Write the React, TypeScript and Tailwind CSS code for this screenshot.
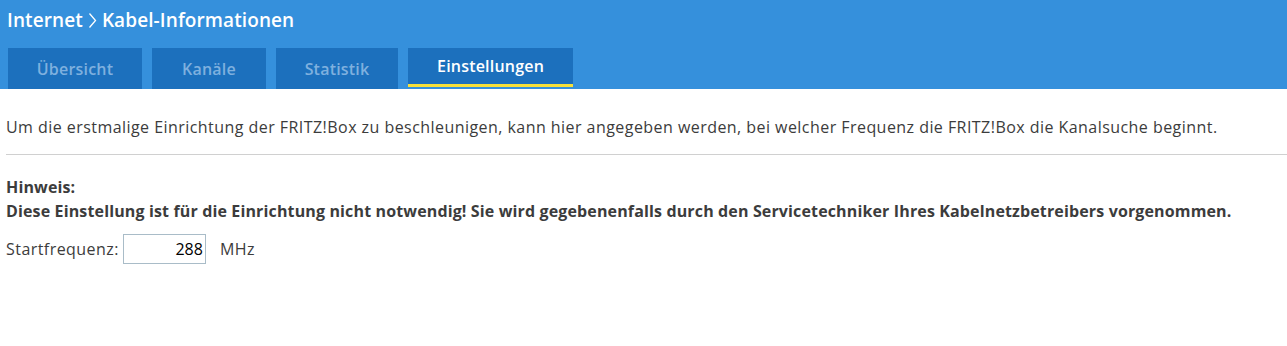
export default function App() {
  const tabs = [
    { label: "Übersicht", w: "w-[134px]", active: false },
    { label: "Kanäle", w: "w-[114px]", active: false },
    { label: "Statistik", w: "w-[122px]", active: false },
    { label: "Einstellungen", w: "w-[165px]", active: true },
  ];

  return (
    <div className="w-[1287px] h-[346px] bg-white text-[#3c3c3c] font-['Open_Sans','Noto_Sans',sans-serif]">
      <div className="bg-[#3590dc] h-[89px] flex flex-col">
        <div className="h-[40px] flex items-center pl-[7px] text-white text-[19px] tracking-[0.1px] font-semibold">
          Internet
          <svg className="mx-[5px] mt-[1px]" width="9" height="17" viewBox="0 0 9 17">
            <path d="M1.5 1.5 L7.5 8.5 L1.5 15.5" fill="none" stroke="white" strokeWidth="1.3" />
          </svg>
          Kabel-Informationen
        </div>
        <div className="flex items-stretch pl-[8px] gap-[10px] h-[41px] mt-[8px]">
          {tabs.map((t) => (
            <div
              key={t.label}
              className={`${t.w} bg-[#1c70bd] flex items-center justify-center text-[16px] tracking-[0.2px] font-semibold ${
                t.active
                  ? "text-white border-b-[3px] border-[#f6e03a] mb-[2px]"
                  : "text-[#7fb0df]"
              }`}
            >
              {t.label}
            </div>
          ))}
        </div>
      </div>

      <p className="pl-[6px] pt-[27px] text-[16px] leading-[22px] tracking-[0.45px]">
        Um die erstmalige Einrichtung der FRITZ!Box zu beschleunigen, kann hier angegeben werden, bei welcher Frequenz die FRITZ!Box die Kanalsuche beginnt.
      </p>
      <div className="ml-[6px] mt-[16px] h-px bg-[#d0d0d0]" />

      <div className="pl-[6px] pt-[20px] text-[16px] leading-[24px] font-bold tracking-[0.14px]">
        <div>Hinweis:</div>
        <div>Diese Einstellung ist für die Einrichtung nicht notwendig! Sie wird gegebenenfalls durch den Servicetechniker Ihres Kabelnetzbetreibers vorgenommen.</div>
      </div>

      <div className="pl-[6px] mt-[11px] flex items-center text-[16px] tracking-[0.45px]">
        <span>Startfrequenz:</span>
        <input
          readOnly
          value="288"
          className="ml-[4px] w-[83px] h-[30px] border border-[#a9bcc8] text-right pr-[2px] text-black text-[16px] tracking-normal outline-none"
        />
        <span className="ml-[14px]">MHz</span>
      </div>
    </div>
  );
}
